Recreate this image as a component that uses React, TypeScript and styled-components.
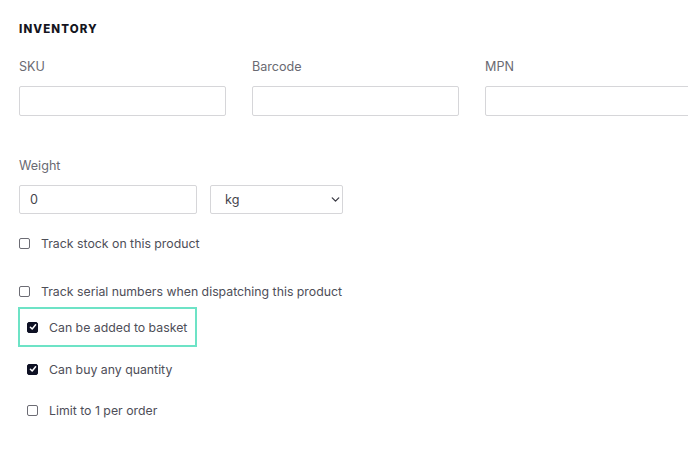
import React from "react";
import styled, { createGlobalStyle } from "styled-components";
import { ChevronDown } from "lucide-react";

const Global = createGlobalStyle`
  html, body { margin: 0; padding: 0; background: #fff; }
  body { font-family: Inter, "Noto Sans", Arial, sans-serif; -webkit-font-smoothing: antialiased; }
  * { box-sizing: border-box; }
`;

const Page = styled.div`
  width: 688px;
  height: 454px;
  overflow: hidden;
  padding: 22px 0 0 19px;
`;

const Heading = styled.h2`
  margin: 0;
  font-size: 11.5px;
  line-height: 15px;
  font-weight: 800;
  letter-spacing: 1.1px;
  color: #141420;
`;

const FieldRow = styled.div<{ $top: number }>`
  display: flex;
  gap: 26px;
  margin-top: ${(p) => p.$top}px;
`;

const Field = styled.label<{ $w: number }>`
  display: flex;
  flex-direction: column;
  width: ${(p) => p.$w}px;
  flex-shrink: 0;
`;

const Label = styled.span`
  font-size: 12.6px;
  line-height: 16px;
  color: #6a6a72;
  margin-bottom: 11px;
`;

const TextInput = styled.input<{ $h: number }>`
  width: 100%;
  height: ${(p) => p.$h}px;
  border: 1px solid #d6d6d9;
  border-radius: 2px;
  padding: 0 10px;
  font: inherit;
  font-size: 12.6px;
  color: #44444c;
  background: #fff;
  outline: none;
`;

const WeightRow = styled.div`
  display: flex;
  gap: 13px;
`;

const WeightBox = styled.div`
  width: 178px;
`;

const SelectWrap = styled.div`
  position: relative;
  width: 133px;
  height: 29px;
`;

const Select = styled.select`
  appearance: none;
  width: 100%;
  height: 100%;
  border: 1px solid #d6d6d9;
  border-radius: 2px;
  padding: 0 10px 0 14px;
  font: inherit;
  font-size: 12.6px;
  color: #44444c;
  background: #fff;
  outline: none;
`;

const Chevron = styled(ChevronDown)`
  position: absolute;
  right: 1px;
  top: 8px;
  pointer-events: none;
  color: #3a3a44;
`;

const CheckList = styled.div`
  display: flex;
  flex-direction: column;
  align-items: flex-start;
`;

const CheckRow = styled.label<{ $top: number; $inset?: boolean; $focus?: boolean }>`
  display: flex;
  align-items: center;
  gap: 11px;
  margin-top: ${(p) => p.$top}px;
  margin-left: ${(p) => (p.$inset ? "-1px" : "0")};
  padding-left: ${(p) => (p.$focus ? "7px" : p.$inset ? "9px" : "0")};
  padding-right: ${(p) => (p.$focus ? "8px" : "0")};
  height: ${(p) => (p.$focus ? "40px" : "16px")};
  border: ${(p) => (p.$focus ? "2px solid #6de3c6" : "0")};
  white-space: nowrap;
  font-size: 12.3px;
  color: #4e4e58;
  cursor: pointer;
`;

const Box = styled.span<{ $checked?: boolean }>`
  display: inline-flex;
  align-items: center;
  justify-content: center;
  width: 11px;
  height: 11px;
  border-radius: 2px;
  flex-shrink: 0;
  border: 1px solid ${(p) => (p.$checked ? "#0e1124" : "#6c6c74")};
  background: ${(p) => (p.$checked ? "#0e1124" : "#fff")};
`;

const Check = ({ checked }: { checked?: boolean }) => (
  <Box $checked={checked}>
    {checked && (
      <svg width="8" height="8" viewBox="0 0 8 8">
        <path d="M1.4 4.2 L3.2 6 L6.6 1.8" fill="none" stroke="#fff" strokeWidth="1.5" strokeLinecap="round" strokeLinejoin="round" />
      </svg>
    )}
  </Box>
);

export default function App() {
  return (
    <>
      <Global />
      <Page>
        <Heading>INVENTORY</Heading>
        <FieldRow $top={22}>
          <Field $w={207}>
            <Label>SKU</Label>
            <TextInput $h={30} />
          </Field>
          <Field $w={207}>
            <Label>Barcode</Label>
            <TextInput $h={30} />
          </Field>
          <Field $w={207}>
            <Label>MPN</Label>
            <TextInput $h={30} />
          </Field>
        </FieldRow>
        <FieldRow $top={42}>
          <Field $w={340}>
            <Label>Weight</Label>
            <WeightRow>
              <WeightBox>
                <TextInput $h={29} defaultValue="0" />
              </WeightBox>
              <SelectWrap>
                <Select defaultValue="kg">
                  <option value="kg">kg</option>
                  <option value="g">g</option>
                  <option value="lb">lb</option>
                </Select>
                <Chevron size={13} strokeWidth={2.4} />
              </SelectWrap>
            </WeightRow>
          </Field>
        </FieldRow>
        <CheckList>
          <CheckRow $top={21}>
            <Check />
            Track stock on this product
          </CheckRow>
          <CheckRow $top={32}>
            <Check />
            Track serial numbers when dispatching this product
          </CheckRow>
          <CheckRow $top={8} $inset $focus>
            <Check checked />
            Can be added to basket
          </CheckRow>
          <CheckRow $top={14} $inset>
            <Check checked />
            Can buy any quantity
          </CheckRow>
          <CheckRow $top={25} $inset>
            <Check />
            Limit to 1 per order
          </CheckRow>
        </CheckList>
      </Page>
    </>
  );
}
